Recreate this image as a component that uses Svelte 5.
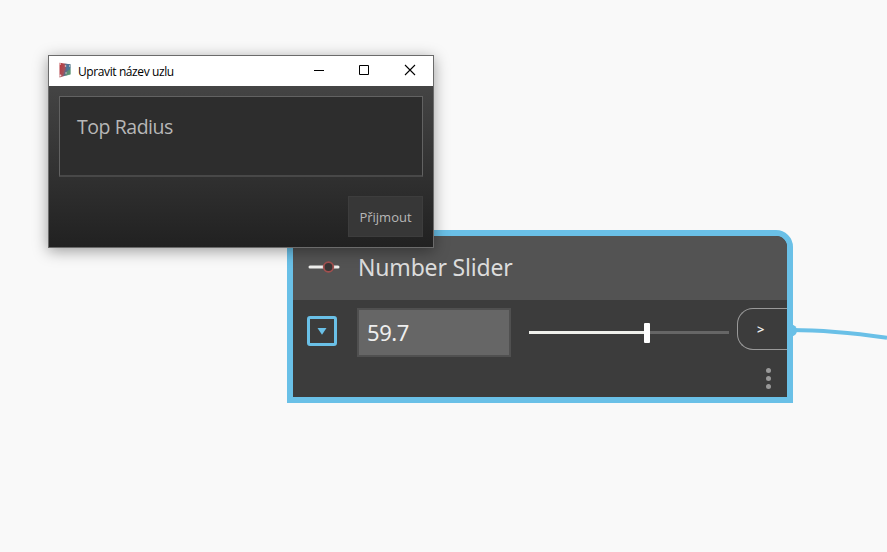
<script>
  let nodeName = $state('Top Radius');
  let value = $state('59.7');
  const percent = 59;
</script>

<main class="canvas">
  <svg class="wire" viewBox="0 0 100 40" width="100" height="40" aria-hidden="true">
    <circle cx="4" cy="15.5" r="6" />
    <path d="M4 15 C38 15 66 18 100 22.8" />
  </svg>

  <section class="node">
    <header class="node-head">
      <svg class="slider-icon" width="34" height="16" viewBox="0 0 34 16" aria-hidden="true">
        <path d="M3 8h28" stroke="#eeeeec" stroke-width="3" stroke-linecap="round" />
        <circle cx="21.5" cy="8" r="4.8" fill="#393636" stroke="#a2504f" stroke-width="1.8" />
      </svg>
      <h2>Number Slider</h2>
    </header>
    <div class="node-body">
      <button class="expand" aria-label="Expand">
        <svg width="10" height="7" viewBox="0 0 10 7"><path d="M.5 0h9L5 6.8z" fill="#6ac0e7" /></svg>
      </button>
      <div class="value">{value}</div>
      <div class="track">
        <div class="fill" style="width: {percent}%"></div>
        <div class="thumb"></div>
      </div>
      <div class="port">&gt;</div>
    </div>
    <div class="more"><i></i><i></i><i></i></div>
  </section>

  <section class="dialog">
    <header class="titlebar">
      <svg class="app-icon" width="14" height="16" viewBox="0 0 14 16" aria-hidden="true">
        <defs>
          <linearGradient id="cube" x1="0" y1=".3" x2="1" y2=".7">
            <stop offset="0" stop-color="#b83a40" />
            <stop offset=".42" stop-color="#a65159" />
            <stop offset=".58" stop-color="#5c6889" />
            <stop offset="1" stop-color="#568978" />
          </linearGradient>
        </defs>
        <path d="M1.5.8l6.5 1 4.5.5v10L8 13.5 1.5 15.5z" fill="url(#cube)" />
        <path d="M6.5 1.5l6 1v4L9 9z" fill="#477ba2" opacity=".65" />
        <path d="M8 10l4.5-3v5.5L7 14z" fill="#5e9c70" opacity=".65" />
        <g fill="#eed6d6"><circle cx="2.3" cy="2" r=".8" /><circle cx="2.4" cy="13.5" r="1" /><circle cx="7.5" cy="4" r=".8" /><circle cx="11.7" cy="4" r=".7" /><circle cx="8" cy="11" r=".7" /></g>
      </svg>
      <span class="title">Upravit název uzlu</span>
      <svg class="controls" width="104" height="12" viewBox="0 0 104 12" fill="none" stroke="#000" aria-hidden="true">
        <path d="M1 6.5h10" />
        <path d="M46.5 1.5h9v9h-9z" />
        <path d="M92 1l10 10M102 1L92 11" stroke-width="1.1" />
      </svg>
    </header>
    <div class="dialog-body">
      <div class="name-field"><span>{nodeName}</span></div>
      <button class="accept"><span>Přijmout</span></button>
    </div>
  </section>
</main>

<style>
  :global(body) { margin: 0; }
  * { box-sizing: border-box; }
  .canvas {
    position: relative;
    width: 887px;
    height: 552px;
    overflow: hidden;
    background: #f9f9f9;
    font-family: "Noto Sans", "Open Sans", sans-serif;
  }
  .wire { position: absolute; left: 787px; top: 315px; }
  .wire circle { fill: #6ac0e7; }
  .wire path { fill: none; stroke: #6ac0e7; stroke-width: 4; }
  .node {
    position: absolute;
    left: 287px;
    top: 230px;
    width: 506px;
    height: 173px;
    border: 6px solid #6ac0e7;
    border-radius: 17px 17px 0 0;
    background: #3c3c3c;
    overflow: hidden;
  }
  .node-head {
    display: flex;
    align-items: center;
    height: 64px;
    padding-left: 14px;
    background: #535353;
  }
  .slider-icon { margin-right: 17px; margin-top: -2px; }
  h2 {
    margin: -2px 0 0;
    font-size: 23px;
    line-height: 32px;
    font-weight: 400;
    letter-spacing: -.18px;
    color: #dcdcdc;
  }
  .node-body { display: flex; align-items: flex-start; padding-top: 8px; }
  .expand {
    display: flex;
    align-items: center;
    justify-content: center;
    width: 30px;
    height: 30px;
    margin: 8px 20px 0 14px;
    padding: 0;
    border: 3px solid #6ac0e7;
    border-radius: 3px;
    background: none;
  }
  .value {
    width: 154px;
    height: 49px;
    padding-left: 8px;
    border: 2px solid #505050;
    background: #666;
    color: #eee;
    font-size: 22px;
    line-height: 44px;
    letter-spacing: -.4px;
  }
  .track {
    display: flex;
    align-items: center;
    width: 200px;
    height: 3px;
    margin: 23px 8px 0 18px;
    background: #666;
  }
  .fill { height: 3px; background: #eff0ec; }
  .thumb { flex: none; width: 6px; height: 20px; margin-left: -3px; border-radius: 1px; background: #fff; }
  .port {
    width: 50px;
    height: 42px;
    padding-left: 19px;
    border: 1px solid #999;
    border-right: 0;
    border-radius: 16px 0 0 16px;
    color: #eee;
    font-size: 13px;
    line-height: 41px;
    font-weight: 600;
  }
  .more { display: flex; flex-direction: column; align-items: flex-end; gap: 3px; padding: 11px 16px 0 0; }
  .more i { width: 5px; height: 5px; border-radius: 50%; background: #999; }
  .dialog {
    position: absolute;
    left: 48px;
    top: 55px;
    width: 386px;
    height: 193px;
    border: 1px solid #6b6b6b;
    box-shadow: 0 3px 14px rgba(0, 0, 0, .38);
    background: linear-gradient(#444 30px, #212121);
  }
  .titlebar { display: flex; align-items: center; height: 30px; padding: 0 16px 0 9px; background: #fff; }
  .app-icon { margin-right: 6px; margin-top: -2px; }
  .title { flex: 1; font-family: "Open Sans", sans-serif; font-size: 12px; letter-spacing: -.4px; color: #000; white-space: nowrap; }
  .controls { margin-top: -2px; }
  .dialog-body { display: flex; flex-direction: column; align-items: flex-end; padding: 10px; }
  .name-field {
    width: 364px;
    height: 81px;
    padding: 16px 17px;
    border: 1px solid #626262;
    border-bottom: 2px solid #484848;
    background: #2d2d2d;
    color: #b7b7b7;
    font-family: "Open Sans", sans-serif;
    font-size: 19.5px;
    line-height: 28px;
    letter-spacing: -.45px;
  }
  .accept {
    width: 75px;
    height: 41px;
    margin-top: 19px;
    padding: 0;
    border: 1px solid #3d3d3d;
    background: #373737;
    color: #b7b7b7;
    font: 13px/40px "Open Sans", sans-serif;
  }
</style>
